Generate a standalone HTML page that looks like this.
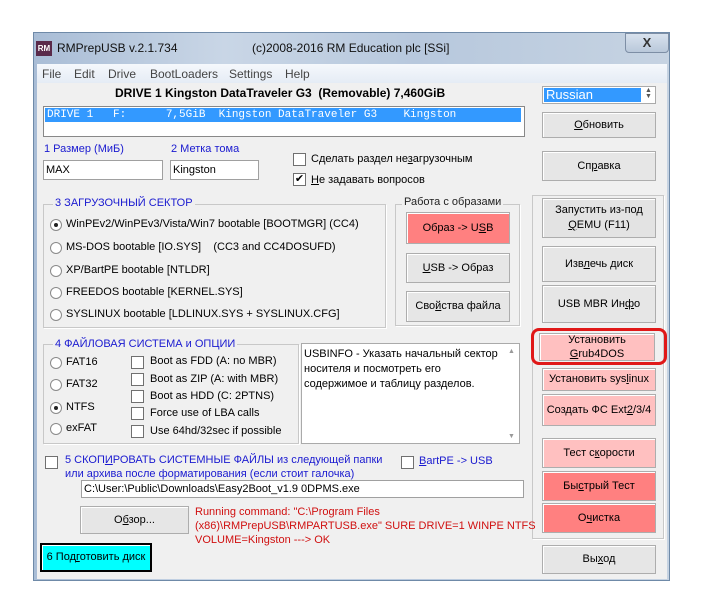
<!DOCTYPE html>
<html><head><meta charset="utf-8"><style>
*{box-sizing:border-box;margin:0;padding:0}
body{width:706px;height:615px;background:#fff;position:relative;overflow:hidden;font-family:"Liberation Sans","DejaVu Sans",sans-serif;font-size:11px;color:#000}
.a{position:absolute;white-space:nowrap}
.win{position:absolute;left:33px;top:32px;width:637px;height:549px;background:linear-gradient(90deg,#a9bdd6,#c9d6e6 30%,#b7c8dd 60%,#c6d3e2);border:1px solid #6f8aa8}
.content{position:absolute;left:37px;top:83px;width:630px;height:496px;background:#f0f0f0}
.menu{position:absolute;left:37px;top:64px;width:630px;height:19px;background:linear-gradient(#f5f8fc,#e5ecf5);color:#333}
.btn{position:absolute;background:#e6e6e6;border:1px solid #adadad;box-shadow:inset 1px 1px 0 #fff;text-align:center;display:flex;align-items:center;justify-content:center;font-size:11px;line-height:15px}
.btn span{display:block}
.grp{position:absolute;border:1px solid #c8c8c8;box-shadow:1px 1px 0 #fff}
.gt{position:absolute;background:#f0f0f0;padding:0 2px}
.blue{color:#1a1ad0}
.rad{position:absolute;width:12px;height:12px;border-radius:50%;border:1px solid #8a8a8a;background:#fff}
.rad.on:after{content:"";position:absolute;left:3px;top:3px;width:4px;height:4px;border-radius:50%;background:#222}
.chk{position:absolute;width:13px;height:13px;border:1px solid #707070;background:#fff;font-size:11px;line-height:11px;text-align:center}
.inp{position:absolute;background:#fff;border:1px solid #a0a0a0;padding-left:2px;display:flex;align-items:center}
.pink{background:#ffc0c0}.sal{background:#ff8080}
u{text-decoration:underline}
</style></head><body>
<div class="win"></div>
<div class="a" style="left:36px;top:41px;width:16px;height:15px;background:#5a2a4a;color:#fff;font-size:8px;font-weight:bold;line-height:15px;text-align:center">RM</div>
<div class="a" style="left:57px;top:41px;font-size:12px;color:#111">RMPrepUSB v.2.1.734</div>
<div class="a" style="left:252px;top:41px;font-size:12px;color:#111">(c)2008-2016 RM Education plc [SSi]</div>
<div class="a" style="left:625px;top:33px;width:44px;height:20px;background:linear-gradient(#d8e2ee,#b9c8da);border:1px solid #7d8ea5;border-radius:0 0 4px 4px;text-align:center;font-weight:bold;color:#333;font-size:13px;line-height:18px">X</div>
<div class="menu"></div>
<div class="a" style="left:42px;top:67px;color:#444;font-size:12px">File</div>
<div class="a" style="left:74px;top:67px;color:#444;font-size:12px">Edit</div>
<div class="a" style="left:108px;top:67px;color:#444;font-size:12px">Drive</div>
<div class="a" style="left:150px;top:67px;color:#444;font-size:12px">BootLoaders</div>
<div class="a" style="left:229px;top:67px;color:#444;font-size:12px">Settings</div>
<div class="a" style="left:285px;top:67px;color:#444;font-size:12px">Help</div>
<div class="content"></div>

<div class="a" style="left:115px;top:86px;font-weight:bold;font-size:12px">DRIVE 1 Kingston DataTraveler G3&nbsp; (Removable) 7,460GiB</div>
<div class="a" style="left:43px;top:106px;width:482px;height:31px;background:#fff;border:1px solid #888"></div>
<div class="a" style="left:45px;top:108px;width:476px;height:14px;background:#3399ff;color:#fff;font-family:'Liberation Mono',monospace;font-size:11px;line-height:14px;padding-left:2px">DRIVE 1&nbsp;&nbsp; F:&nbsp;&nbsp;&nbsp;&nbsp;&nbsp; 7,5GiB&nbsp; Kingston DataTraveler G3&nbsp;&nbsp;&nbsp; Kingston</div>

<div class="a" style="left:542px;top:86px;width:114px;height:18px;background:#fff;border:1px solid #aaa"></div>
<div class="a" style="left:544px;top:88px;width:97px;height:14px;background:#3399ff;color:#fff;font-size:13px;line-height:14px;padding-left:2px">Russian</div>
<div class="a" style="left:645px;top:88px;font-size:7px;color:#555;line-height:6px">▲<br>▼</div>
<div class="btn" style="left:542px;top:112px;width:114px;height:26px"><span><u>О</u>бновить</span></div>
<div class="btn" style="left:542px;top:151px;width:114px;height:30px"><span>Сп<u>р</u>авка</span></div>

<div class="a blue" style="left:44px;top:143px">1 Размер (МиБ)</div>
<div class="a blue" style="left:171px;top:143px">2 Метка тома</div>
<div class="inp" style="left:43px;top:160px;width:120px;height:20px">MAX</div>
<div class="inp" style="left:170px;top:160px;width:89px;height:20px">Kingston</div>
<div class="chk" style="left:293px;top:153px"></div>
<div class="a" style="left:311px;top:153px">Сделать раздел не<u>з</u>агрузочным</div>
<div class="chk" style="left:293px;top:173px">✔</div>
<div class="a" style="left:311px;top:174px"><u>Н</u>е задавать вопросов</div>

<div class="grp" style="left:43px;top:204px;width:343px;height:124px"></div>
<div class="gt blue" style="left:53px;top:197px">3 ЗАГРУЗОЧНЫЙ СЕКТОР</div>
<div class="rad on" style="left:50px;top:219px"></div><div class="a" style="left:66px;top:218px">WinPEv2/WinPEv3/Vista/Win7 bootable [BOOTMGR] (CC4)</div>
<div class="rad" style="left:50px;top:242px"></div><div class="a" style="left:66px;top:241px">MS-DOS bootable [IO.SYS]&nbsp;&nbsp;&nbsp; (CC3 and CC4DOSUFD)</div>
<div class="rad" style="left:50px;top:265px"></div><div class="a" style="left:66px;top:264px">XP/BartPE bootable [NTLDR]</div>
<div class="rad" style="left:50px;top:287px"></div><div class="a" style="left:66px;top:286px">FREEDOS bootable [KERNEL.SYS]</div>
<div class="rad" style="left:50px;top:309px"></div><div class="a" style="left:66px;top:308px">SYSLINUX bootable [LDLINUX.SYS + SYSLINUX.CFG]</div>

<div class="grp" style="left:395px;top:204px;width:125px;height:122px"></div>
<div class="gt" style="left:402px;top:196px;color:#222">Работа с образами</div>
<div class="btn sal" style="left:406px;top:212px;width:104px;height:32px"><span>Образ -&gt; U<u>S</u>B</span></div>
<div class="btn" style="left:406px;top:253px;width:104px;height:30px"><span><u>U</u>SB -&gt; Образ</span></div>
<div class="btn" style="left:406px;top:291px;width:104px;height:31px"><span>Сво<u>й</u>ства файла</span></div>

<div class="grp" style="left:532px;top:195px;width:132px;height:344px"></div>
<div class="btn" style="left:542px;top:198px;width:114px;height:40px;background:#e3e3e3"><span>Запустить из-под<br><u>Q</u>EMU (F11)</span></div>
<div class="btn" style="left:542px;top:246px;width:114px;height:36px"><span>Изв<u>л</u>ечь диск</span></div>
<div class="btn" style="left:542px;top:285px;width:114px;height:38px"><span>USB MBR Ин<u>ф</u>о</span></div>
<div class="a" style="left:531px;top:328px;width:136px;height:37px;border:3px solid #e01818;border-radius:8px"></div>
<div class="btn pink" style="left:539px;top:333px;width:116px;height:28px;line-height:14px"><span>Установить<br><u>G</u>rub4DOS</span></div>
<div class="btn pink" style="left:542px;top:368px;width:114px;height:23px"><span>Установить sys<u>l</u>inux</span></div>
<div class="btn pink" style="left:542px;top:394px;width:114px;height:32px"><span>Создать ФС Ext<u>2</u>/3/4</span></div>
<div class="btn pink" style="left:542px;top:438px;width:114px;height:30px"><span>Тест с<u>к</u>орости</span></div>
<div class="btn sal" style="left:542px;top:471px;width:114px;height:30px"><span>Бы<u>с</u>трый Тест</span></div>
<div class="btn sal" style="left:542px;top:503px;width:114px;height:30px"><span>О<u>ч</u>истка</span></div>
<div class="btn" style="left:542px;top:545px;width:114px;height:29px"><span>Вы<u>х</u>од</span></div>

<div class="grp" style="left:43px;top:344px;width:256px;height:100px"></div>
<div class="gt blue" style="left:53px;top:338px">4 ФАЙЛОВАЯ СИСТЕМА и ОПЦИИ</div>
<div class="rad" style="left:50px;top:357px"></div><div class="a" style="left:66px;top:356px">FAT16</div>
<div class="rad" style="left:50px;top:379px"></div><div class="a" style="left:66px;top:378px">FAT32</div>
<div class="rad on" style="left:50px;top:402px"></div><div class="a" style="left:66px;top:401px">NTFS</div>
<div class="rad" style="left:50px;top:423px"></div><div class="a" style="left:66px;top:422px">exFAT</div>
<div class="chk" style="left:131px;top:356px"></div><div class="a" style="left:150px;top:355px">Boot as FDD (A: no MBR)</div>
<div class="chk" style="left:131px;top:373px"></div><div class="a" style="left:150px;top:373px">Boot as ZIP (A: with MBR)</div>
<div class="chk" style="left:131px;top:390px"></div><div class="a" style="left:150px;top:390px">Boot as HDD (C: 2PTNS)</div>
<div class="chk" style="left:131px;top:407px"></div><div class="a" style="left:150px;top:407px">Force use of LBA calls</div>
<div class="chk" style="left:131px;top:425px"></div><div class="a" style="left:150px;top:425px">Use 64hd/32sec if possible</div>

<div class="a" style="left:301px;top:343px;width:219px;height:101px;background:#fff;border:1px solid #aaa"></div>
<div class="a" style="left:304px;top:347px;line-height:15px;white-space:normal;width:200px">USBINFO - Указать начальный сектор носителя и посмотреть его содержимое и таблицу разделов.</div>
<div class="a" style="left:508px;top:348px;font-size:7px;color:#999">▲</div>
<div class="a" style="left:508px;top:433px;font-size:7px;color:#999">▼</div>

<div class="chk" style="left:45px;top:456px"></div>
<div class="a blue" style="left:65px;top:454px">5 СКОП<u>И</u>РОВАТЬ СИСТЕМНЫЕ ФАЙЛЫ из следующей папки</div>
<div class="a blue" style="left:65px;top:468px">или архива после форматирования (если стоит галочка)</div>
<div class="chk" style="left:401px;top:456px"></div>
<div class="a blue" style="left:419px;top:455px"><u>B</u>artPE -&gt; USB</div>
<div class="inp" style="left:81px;top:480px;width:443px;height:18px">C:\User:\Public\Downloads\Easy2Boot_v1.9 0DPMS.exe</div>
<div class="btn" style="left:80px;top:506px;width:109px;height:28px"><span>О<u>б</u>зор...</span></div>
<div class="a" style="left:195px;top:505px;color:#d01010;line-height:14px">Running command: "C:\Program Files<br>(x86)\RMPrepUSB\RMPARTUSB.exe" SURE DRIVE=1 WINPE NTFS<br>VOLUME=Kingston ---&gt; OK</div>
<div class="btn" style="left:40px;top:543px;width:112px;height:29px;background:#00ffff;border:2px solid #000"><span>6 Под<u>г</u>отовить диск</span></div>
</body></html>
